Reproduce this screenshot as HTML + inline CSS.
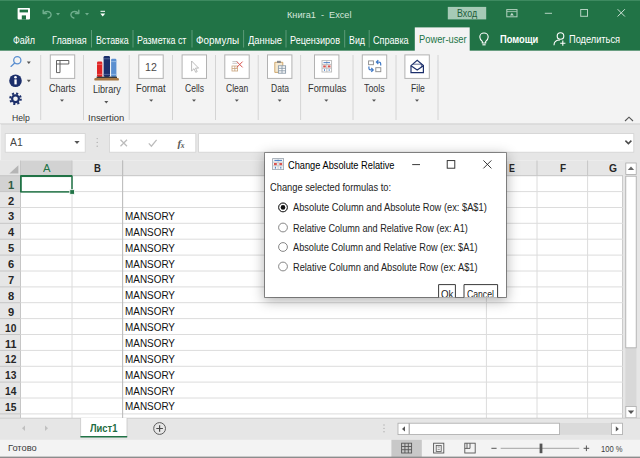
<!DOCTYPE html>
<html><head><meta charset="utf-8"><title>Excel</title>
<style>
html,body{margin:0;padding:0}
body{width:640px;height:458px;position:relative;overflow:hidden;background:#e6e6e6;font-family:"Liberation Sans",sans-serif}
svg{position:absolute;left:0;top:0}
.t{position:absolute;white-space:pre;line-height:14px;transform-origin:0 50%}
</style></head><body>
<svg width="640" height="458" viewBox="0 0 640 458">
<!-- title + tabs -->
<rect x="0" y="0" width="640" height="50.8" fill="#217346"/>
<rect x="0" y="0" width="640" height="1" fill="#3d8a60"/>
<!-- ribbon -->
<rect x="0" y="50.8" width="640" height="72.7" fill="#f3f3f3"/>
<rect x="0" y="123.5" width="640" height="1" fill="#d0d0d0"/>
<!-- active tab -->
<rect x="414.8" y="27.4" width="54.9" height="24" fill="#f3f3f3"/>
<!-- tab separators -->
<g stroke="#5c9a78" stroke-width="1">
<path d="M91.5 30V47.5M133 30V47.5M192 30V47.5M243.6 30V47.5M286 30V47.5M344.7 30V47.5M369.2 30V47.5"/>
</g>
<!-- Вход button -->
<rect x="447.8" y="6.9" width="38.4" height="12.5" fill="#a6cab6"/>
<!-- save icon -->
<rect x="17.6" y="7.9" width="12.4" height="11.5" rx="0.8" fill="#fff"/>
<rect x="19.6" y="9.6" width="8.4" height="2.8" fill="#217346"/>
<rect x="21.8" y="15.4" width="4.2" height="4.2" fill="#217346"/>
<rect x="19.4" y="14.2" width="8.8" height="1.2" fill="#217346" opacity="0"/>
<!-- undo/redo -->
<g fill="none" stroke="#6fae8d" stroke-width="1.4" stroke-linecap="round" stroke-linejoin="round">
<path d="M43.2 10.2V13.6H46.6"/><path d="M43.6 13.3C45.5 11 49 10.8 50.6 13C51.8 15 50.8 17.2 48.2 18"/>
<path d="M78.8 10.2V13.6H75.4"/><path d="M78.4 13.3C76.5 11 73 10.8 71.4 13C70.2 15 71.2 17.2 73.8 18"/>
</g>
<path d="M56 13L60 13L58 15.4Z" fill="#6fae8d"/>
<path d="M85 13L89 13L87 15.4Z" fill="#6fae8d"/>
<path d="M100.5 11.3H105" stroke="#fff" stroke-width="1"/>
<path d="M100.3 13.6L105.2 13.6L102.75 16.4Z" fill="#fff"/>
<!-- ribbon display options -->
<g fill="none" stroke="#b4d2c1" stroke-width="1">
<rect x="506.8" y="9.6" width="10.2" height="7.2"/>
<path d="M507 11.6H516.8" stroke-width="0.8"/>
</g>
<path d="M510 15.4L511.9 12.8L513.8 15.4Z" fill="#c4dccf"/>
<!-- window controls -->
<g fill="none" stroke="#b4d2c1" stroke-width="1">
<path d="M544.8 13.3H552"/>
<rect x="580.7" y="9.5" width="6.8" height="6.8"/>
<path d="M617.6 9.2L624.9 16.5M624.9 9.2L617.6 16.5" stroke="#cde1d6"/>
</g>
<!-- lightbulb -->
<g fill="none" stroke="#fff" stroke-width="1.1">
<path d="M482.3 43V41.4C480.6 40 479.8 38.6 479.8 37C479.8 34.7 481.7 33 484 33C486.3 33 488.2 34.7 488.2 37C488.2 38.6 487.4 40 485.7 41.4V43Z"/>
<path d="M482.4 44.8H485.6"/>
</g>
<!-- share icon -->
<g fill="none" stroke="#fff" stroke-width="1.1">
<circle cx="560.5" cy="36" r="3.3"/>
<path d="M554 45.2C554 41.6 556.6 40 560 40"/>
<path d="M560.2 43.2H565.4M562.8 40.6V45.8"/>
</g>
<!-- ribbon separators -->
<g stroke="#d4d4d4" stroke-width="1">
<path d="M40.7 55V120M83.5 55V120M129.2 55V120M172.5 55V120M215.5 55V120M258.2 55V120M300.6 55V120M353 55V120M396 55V120M438 55V120"/>
</g>
<!-- big button icon boxes -->
<g fill="#fff" stroke="#b2b2b2" stroke-width="1">
<rect x="50.3" y="54.9" width="24.4" height="23.5"/>
<rect x="138.8" y="54.9" width="24.4" height="23.5"/>
<rect x="182.1" y="54.9" width="24.4" height="23.5"/>
<rect x="224.8" y="54.9" width="24.4" height="23.5"/>
<rect x="267.5" y="54.9" width="24.4" height="23.5"/>
<rect x="314.5" y="54.9" width="24.4" height="23.5"/>
<rect x="362.3" y="54.9" width="24.4" height="23.5"/>
<rect x="404.9" y="54.9" width="24.4" height="23.5"/>
</g>
<!-- drop arrows under big buttons -->
<g fill="#555">
<path d="M60 99.4L64 99.4L62 101.8Z"/>
<path d="M104.3 101L108.3 101L106.3 103.4Z"/>
<path d="M149.2 99.4L153.2 99.4L151.2 101.8Z"/>
<path d="M192 99.4L196 99.4L194 101.8Z"/>
<path d="M234.8 99.4L238.8 99.4L236.8 101.8Z"/>
<path d="M277.7 99.4L281.7 99.4L279.7 101.8Z"/>
<path d="M324.3 99.4L328.3 99.4L326.3 101.8Z"/>
<path d="M372 99.4L376 99.4L374 101.8Z"/>
<path d="M415 99.4L419 99.4L417 101.8Z"/>
<path d="M26.8 61.5L30.8 61.5L28.8 63.9Z"/>
<path d="M26.8 79.8L30.8 79.8L28.8 82.2Z"/>
</g>
<!-- help group icons -->
<g fill="none" stroke="#5b8fd0" stroke-width="1.3">
<circle cx="17.3" cy="60.2" r="3.6"/>
<path d="M14.7 63L11 66.4" stroke-linecap="round"/>
</g>
<circle cx="15.5" cy="80.7" r="6.3" fill="#1c2f6b"/>
<rect x="14.4" y="79.4" width="2.3" height="5" fill="#fff"/>
<circle cx="15.5" cy="77.3" r="1.3" fill="#fff"/>
<g fill="none" stroke="#1c2f6b">
<circle cx="15.5" cy="98.7" r="3.4" stroke-width="2.2"/>
<circle cx="15.5" cy="98.7" r="5.3" stroke-width="2" stroke-dasharray="2.08 2.08"/>
</g>
<!-- charts icon -->
<g fill="none" stroke="#555" stroke-width="0.9">
<path d="M56.5 60.5H68.8V64H60V72.6H56.5Z"/>
<path d="M60 60.5V64H56.5"/>
</g>
<!-- library books -->
<rect x="97" y="61.6" width="5.3" height="15.4" rx="1.2" fill="#e02424"/>
<rect x="103.6" y="55.9" width="6.4" height="21.1" rx="1.4" fill="#1c2f6b"/>
<rect x="111.1" y="58.8" width="5.3" height="18.2" rx="1.2" fill="#5b8fd0"/>
<path d="M97 64.3H102.3M97 74.4H102.3" stroke="#f08a8a" stroke-width="0.7"/>
<path d="M103.6 58.8H110M103.6 74.4H110" stroke="#6d7cae" stroke-width="0.7"/>
<path d="M111.1 61.6H116.4M111.1 74.4H116.4" stroke="#a9c6ea" stroke-width="0.7"/>
<rect x="96.6" y="76.6" width="20.4" height="1.4" fill="#3a3a3a"/>
<rect x="94.3" y="77.9" width="24.6" height="2.7" rx="1.2" fill="#a87844"/>
<!-- cells cursor -->
<path d="M191.6 61L191.6 71L194 68.7L195.7 72.3L197.2 71.6L195.5 68.1L198.6 68.1Z" fill="#fff" stroke="#aaa" stroke-width="0.8"/>
<!-- clean icon -->
<g fill="none" stroke="#c8a27a" stroke-width="0.8">
<rect x="232" y="66" width="5.6" height="5"/>
<path d="M232 68.5H237.6M234.8 66V71"/>
<path d="M232.4 61.5H237.6M232.4 63.3H237.6" stroke="#bbb"/>
</g>
<path d="M236.8 61.6L242.6 67.4M242.6 61.6L236.8 67.4" stroke="#d9534f" stroke-width="1"/>
<!-- data icon -->
<g fill="none" stroke-width="0.9">
<path d="M274.8 62.3H282.8V72.4H274.8Z" stroke="#c9a063" fill="#f7e9cf"/>
<rect x="277" y="60.8" width="3.8" height="2.2" fill="#888" stroke="none"/>
<rect x="278.4" y="65.8" width="7.2" height="7.4" fill="#fff" stroke="#8a9aa8"/>
<path d="M278.4 68.3H285.6M278.4 70.8H285.6M282 65.8V73.2" stroke="#8a9aa8"/>
</g>
<!-- formulas icon -->
<g stroke-width="0.9">
<rect x="322" y="60.6" width="9.6" height="11.4" fill="#fff" stroke="#b8b8b8"/>
<path d="M322 64.4H331.6M322 68.2H331.6M326.8 60.6V72" stroke="#b8b8b8" fill="none"/>
<rect x="323.2" y="65.4" width="2.6" height="2" fill="#d9534f" stroke="none"/>
<rect x="327.9" y="65.4" width="2.6" height="2" fill="#d9534f" stroke="none"/>
<path d="M323.5 62.6L330 62.6" stroke="#3f78c5"/>
<path d="M324.5 70.9V69.2M329.2 70.9V69.2" stroke="#3f78c5"/>
</g>
<!-- tools icon -->
<g fill="none" stroke-width="0.9">
<rect x="368.6" y="60.9" width="4.8" height="3.8" stroke="#8a8a8a"/>
<rect x="375.8" y="67.7" width="5" height="4" stroke="#8a8a8a"/>
<path d="M380.7 65.4V63.8Q380.7 62.1 379 62.1H376.6M378.3 60.2L376.4 62.1L378.3 64" stroke="#3f78c5" stroke-width="1.2"/>
<path d="M368.9 66.4V68.2Q368.9 69.9 370.6 69.9H373M371.3 68L373.2 69.9L371.3 71.8" stroke="#3f78c5" stroke-width="1.2"/>
</g>
<!-- file envelope -->
<g fill="none" stroke="#1c2f6b" stroke-width="1.2">
<path d="M411 65.6L417.2 60.4L423.4 65.6V72.6H411Z"/>
<path d="M411 65.8L417.2 70L423.4 65.8"/>
<path d="M413 64.2H421.4V67" stroke-width="0.7"/>
</g>
<!-- collapse ribbon -->
<path d="M625 121L629 117.2L633 121" fill="none" stroke="#555" stroke-width="1.1"/>

<rect x="0" y="124" width="0.9" height="334" fill="#fff" opacity="0.5"/>
<!-- formula bar -->
<rect x="5.2" y="133.6" width="80" height="18.6" fill="#fff" stroke="#d2d2d2" stroke-width="0.8"/>
<path d="M74.4 141L79.6 141L77 144Z" fill="#555"/>
<g fill="#b0b0b0"><circle cx="97.2" cy="138.6" r="0.7"/><circle cx="97.2" cy="142.4" r="0.7"/><circle cx="97.2" cy="146.2" r="0.7"/></g>
<rect x="109.4" y="133.6" width="86.4" height="18.6" fill="#fff" stroke="#d2d2d2" stroke-width="0.8"/>
<path d="M120.5 139.8L127 146.3M127 139.8L120.5 146.3" stroke="#bcbcbc" stroke-width="1.3" fill="none"/>
<path d="M148.8 143.4L151.4 146.2L156.6 139.8" stroke="#bcbcbc" stroke-width="1.3" fill="none"/>
<rect x="198.6" y="133.6" width="435.2" height="18.6" fill="#fff" stroke="#d2d2d2" stroke-width="0.8"/>
<path d="M625.4 140.6L628.4 143.6L631.4 140.6" fill="none" stroke="#4a4a4a" stroke-width="1.5"/>

<!-- grid -->
<rect x="0" y="160.5" width="624.5" height="257.5" fill="#fff"/>
<rect x="0" y="160.5" width="624.5" height="15.3" fill="#e6e6e6"/>
<rect x="0" y="160.5" width="20.5" height="257.5" fill="#e6e6e6"/>
<rect x="20.5" y="160.5" width="51.5" height="15.3" fill="#d2d2d2"/>
<rect x="0" y="175.8" width="20.5" height="16" fill="#d2d2d2"/>
<path d="M18.4 165.2V173.6H9.4Z" fill="#b5b5b5"/>
<!-- header separators -->
<g stroke="#c6c6c6" stroke-width="1" fill="none">
<path d="M20.5 160.5V418M72 160.5V175.8M122.6 160.5V175.8M486.4 160.5V175.8M537 160.5V175.8M587.6 160.5V175.8M622.6 175.7V418"/>
<path d="M0 175.7H624M0 191.6H20.5M0 207.5H20.5M0 223.3H20.5M0 239.2H20.5M0 255.1H20.5M0 271.0H20.5M0 286.9H20.5M0 302.7H20.5M0 318.6H20.5M0 334.5H20.5M0 350.4H20.5M0 366.3H20.5M0 382.1H20.5M0 398.0H20.5M0 413.9H20.5"/>
</g>
<g stroke="#dcdcdc" stroke-width="1" fill="none">
<path d="M72 176V418M486.4 176V418M537 176V418M587.6 176V418"/>
<path d="M20.5 191.6H624M20.5 207.5H624M20.5 223.3H624M20.5 239.2H624M20.5 255.1H624M20.5 271.0H624M20.5 286.9H624M20.5 302.7H624M20.5 318.6H624M20.5 334.5H624M20.5 350.4H624M20.5 366.3H624M20.5 382.1H624M20.5 398.0H624M20.5 413.9H624"/>
</g>
<path d="M122.6 160.5V418" stroke="#bdbdbd" stroke-width="1.1"/>
<!-- selection -->
<rect x="20.3" y="160.5" width="51.8" height="15.3" fill="none"/>
<path d="M20.5 175.6H72" stroke="#217346" stroke-width="1.4"/>
<path d="M20.6 175.8V192" stroke="#217346" stroke-width="1.2"/>
<rect x="21" y="176.3" width="51" height="15.6" fill="none" stroke="#217346" stroke-width="1.5"/>
<rect x="69.8" y="189.7" width="4.6" height="4.6" fill="#217346" stroke="#fff" stroke-width="0.8"/>

<!-- vertical scrollbar -->
<rect x="623" y="160.5" width="17" height="258" fill="#e6e6e6"/>
<rect x="625.4" y="176" width="11" height="230" fill="#d8d8d8"/>
<rect x="625.8" y="163" width="10.4" height="11.4" fill="#fff" stroke="#ababab" stroke-width="0.8"/>
<path d="M627.8 170L631 166.6L634.2 170Z" fill="#666"/>
<rect x="625.8" y="176.2" width="10.4" height="171.6" fill="#fff" stroke="#ababab" stroke-width="0.8"/>
<rect x="625.8" y="406.4" width="10.4" height="11.4" fill="#fff" stroke="#ababab" stroke-width="0.8"/>
<path d="M627.8 410.6L634.2 410.6L631 414Z" fill="#555"/>

<!-- sheet tab bar -->
<rect x="0" y="418" width="640" height="22" fill="#e6e6e6"/>
<path d="M0 418.2H640" stroke="#c6c6c6" stroke-width="0.8"/>
<rect x="80.6" y="418" width="46.4" height="18.6" fill="#fff"/>
<path d="M80.6 418V437M127 418V437" stroke="#c6c6c6" stroke-width="0.8"/>
<path d="M80.4 436.8H127.2" stroke="#217346" stroke-width="1.6"/>
<path d="M25 425.4L22 428.2L25 431Z" fill="#c0c0c0"/>
<path d="M45 425.4L48 428.2L45 431Z" fill="#c0c0c0"/>
<circle cx="159.6" cy="428.5" r="5.9" fill="none" stroke="#5a5a5a" stroke-width="1"/>
<path d="M156.3 428.5H162.9M159.6 425.2V431.8" stroke="#4a4a4a" stroke-width="1.2"/>
<g fill="#b0b0b0"><circle cx="384" cy="425" r="0.7"/><circle cx="384" cy="428.4" r="0.7"/><circle cx="384" cy="431.8" r="0.7"/></g>
<!-- horizontal scrollbar -->
<rect x="409" y="423" width="202.6" height="11.8" fill="#dadada"/>
<rect x="398" y="423.2" width="11" height="11.4" fill="#fff" stroke="#ababab" stroke-width="0.8"/>
<path d="M405 426.3L402 428.9L405 431.5Z" fill="#555"/>
<rect x="409.6" y="423.2" width="150" height="11.4" fill="#fff" stroke="#ababab" stroke-width="0.8"/>
<rect x="611.6" y="423.2" width="10.8" height="11.4" fill="#fff" stroke="#ababab" stroke-width="0.8"/>
<path d="M615.8 426.3L618.8 428.9L615.8 431.5Z" fill="#555"/>

<!-- status bar -->
<rect x="0" y="439.8" width="640" height="18.2" fill="#f3f3f3"/>
<rect x="391.4" y="439.8" width="30.4" height="18.2" fill="#c8c8c8"/>
<rect x="0" y="456.6" width="640" height="1.4" fill="#8c8c8c"/>
<g fill="none" stroke="#555" stroke-width="0.9">
<rect x="401.6" y="443.2" width="10" height="9.8"/>
<path d="M401.6 446.5H411.6M401.6 449.7H411.6M404.9 443.2V453M408.3 443.2V453"/>
<rect x="433.6" y="443.2" width="10.2" height="9.8"/>
<rect x="436.2" y="445.4" width="5" height="6" stroke-width="0.8"/>
<path d="M437.6 447H439.8M437.6 449.4H439.8" stroke-width="0.6"/>
<rect x="464.8" y="443.2" width="10.4" height="9.8"/>
<path d="M470 443.2V448.4M464.8 448.4H470M467 443.2V448.4" />
</g>
<path d="M491.4 448.3H496.6" stroke="#555" stroke-width="1"/>
<path d="M500.7 448.3H579.2" stroke="#9a9a9a" stroke-width="0.9"/>
<rect x="539.6" y="443.6" width="2.8" height="9.6" fill="#555"/>
<path d="M583.6 448.3H589.2M586.4 445.5V451.1" stroke="#555" stroke-width="1"/>
</svg>
<span class="t" style="left:287.00px;top:7.50px;font-size:9.5px;transform:scaleX(0.9645);color:#d5e6dc;">Книга1  -  Excel</span>
<span class="t" style="left:457.30px;top:6.50px;font-size:10.2px;transform:scaleX(0.8721);color:#1e5c3a;">Вход</span>
<span class="t" style="left:13.30px;top:32.50px;font-size:10.8px;transform:scaleX(0.8287);color:#ffffff;">Файл</span>
<span class="t" style="left:52.30px;top:32.50px;font-size:10.8px;transform:scaleX(0.8441);color:#ffffff;">Главная</span>
<span class="t" style="left:96.00px;top:32.50px;font-size:10.8px;transform:scaleX(0.8146);color:#ffffff;">Вставка</span>
<span class="t" style="left:137.30px;top:32.50px;font-size:10.8px;transform:scaleX(0.8233);color:#ffffff;">Разметка ст</span>
<span class="t" style="left:196.00px;top:32.50px;font-size:10.8px;transform:scaleX(0.9152);color:#ffffff;">Формулы</span>
<span class="t" style="left:247.60px;top:32.50px;font-size:10.8px;transform:scaleX(0.8689);color:#ffffff;">Данные</span>
<span class="t" style="left:290.00px;top:32.50px;font-size:10.8px;transform:scaleX(0.8403);color:#ffffff;">Рецензиров</span>
<span class="t" style="left:349.00px;top:32.50px;font-size:10.8px;transform:scaleX(0.8185);color:#ffffff;">Вид</span>
<span class="t" style="left:373.40px;top:32.50px;font-size:10.8px;transform:scaleX(0.8404);color:#ffffff;">Справка</span>
<span class="t" style="left:418.75px;top:31.90px;font-size:10.8px;transform:scaleX(0.8632);color:#217346;">Power-user</span>
<span class="t" style="left:499.70px;top:31.80px;font-size:10.8px;transform:scaleX(0.8625);color:#ffffff;font-weight:700;">Помощи</span>
<span class="t" style="left:569.00px;top:31.80px;font-size:10.8px;transform:scaleX(0.8553);color:#ffffff;">Поделиться</span>
<span class="t" style="left:11.90px;top:110.60px;font-size:9.8px;transform:scaleX(0.8831);color:#333333;">Help</span>
<span class="t" style="left:87.50px;top:110.60px;font-size:9.8px;transform:scaleX(0.9647);color:#333333;">Insertion</span>
<span class="t" style="left:49.25px;top:81.50px;font-size:10.3px;transform:scaleX(0.8738);color:#333333;">Charts</span>
<span class="t" style="left:93.00px;top:83.00px;font-size:10.3px;transform:scaleX(0.8814);color:#333333;">Library</span>
<span class="t" style="left:136.25px;top:81.50px;font-size:10.3px;transform:scaleX(0.9042);color:#333333;">Format</span>
<span class="t" style="left:184.50px;top:81.50px;font-size:10.3px;transform:scaleX(0.8300);color:#333333;">Cells</span>
<span class="t" style="left:225.75px;top:81.50px;font-size:10.3px;transform:scaleX(0.8269);color:#333333;">Clean</span>
<span class="t" style="left:271.00px;top:81.50px;font-size:10.3px;transform:scaleX(0.8270);color:#333333;">Data</span>
<span class="t" style="left:307.50px;top:81.50px;font-size:10.3px;transform:scaleX(0.8970);color:#333333;">Formulas</span>
<span class="t" style="left:364.00px;top:81.50px;font-size:10.3px;transform:scaleX(0.8608);color:#333333;">Tools</span>
<span class="t" style="left:410.50px;top:81.50px;font-size:10.3px;transform:scaleX(0.8377);color:#333333;">File</span>
<span class="t" style="left:145.20px;top:59.60px;font-size:10.8px;transform:scaleX(0.9821);color:#4a4a4a;">12</span>
<span class="t" style="left:10.20px;top:136.20px;font-size:10.4px;transform:scaleX(0.9985);color:#444;">A1</span>
<span class="t" style="left:42.70px;top:161.60px;font-size:10.2px;transform:scaleX(1.1034);color:#217346;">A</span>
<span class="t" style="left:93.80px;top:161.60px;font-size:10.2px;transform:scaleX(0.9376);color:#262626;font-weight:700;">B</span>
<span class="t" style="left:508.80px;top:161.60px;font-size:10.2px;transform:scaleX(0.8680);color:#262626;font-weight:700;">E</span>
<span class="t" style="left:559.50px;top:161.60px;font-size:10.2px;transform:scaleX(0.9784);color:#262626;font-weight:700;">F</span>
<span class="t" style="left:608.70px;top:161.60px;font-size:10.2px;transform:scaleX(1.0079);color:#262626;font-weight:700;">G</span>
<span class="t" style="left:7.60px;top:177.70px;font-size:10.8px;transform:scaleX(1.0306);color:#2f5a43;font-weight:700;">1</span>
<span class="t" style="left:7.60px;top:193.58px;font-size:10.8px;transform:scaleX(1.0306);color:#262626;font-weight:700;">2</span>
<span class="t" style="left:7.60px;top:209.46px;font-size:10.8px;transform:scaleX(1.0306);color:#262626;font-weight:700;">3</span>
<span class="t" style="left:125.00px;top:209.86px;font-size:10.3px;transform:scaleX(0.9636);color:#111;">MANSORY</span>
<span class="t" style="left:7.60px;top:225.34px;font-size:10.8px;transform:scaleX(1.0306);color:#262626;font-weight:700;">4</span>
<span class="t" style="left:125.00px;top:225.74px;font-size:10.3px;transform:scaleX(0.9636);color:#111;">MANSORY</span>
<span class="t" style="left:7.60px;top:241.22px;font-size:10.8px;transform:scaleX(1.0306);color:#262626;font-weight:700;">5</span>
<span class="t" style="left:125.00px;top:241.62px;font-size:10.3px;transform:scaleX(0.9636);color:#111;">MANSORY</span>
<span class="t" style="left:7.60px;top:257.10px;font-size:10.8px;transform:scaleX(1.0306);color:#262626;font-weight:700;">6</span>
<span class="t" style="left:125.00px;top:257.50px;font-size:10.3px;transform:scaleX(0.9636);color:#111;">MANSORY</span>
<span class="t" style="left:7.60px;top:272.98px;font-size:10.8px;transform:scaleX(1.0306);color:#262626;font-weight:700;">7</span>
<span class="t" style="left:125.00px;top:273.38px;font-size:10.3px;transform:scaleX(0.9636);color:#111;">MANSORY</span>
<span class="t" style="left:7.60px;top:288.86px;font-size:10.8px;transform:scaleX(1.0306);color:#262626;font-weight:700;">8</span>
<span class="t" style="left:125.00px;top:289.26px;font-size:10.3px;transform:scaleX(0.9636);color:#111;">MANSORY</span>
<span class="t" style="left:7.60px;top:304.74px;font-size:10.8px;transform:scaleX(1.0306);color:#262626;font-weight:700;">9</span>
<span class="t" style="left:125.00px;top:305.14px;font-size:10.3px;transform:scaleX(0.9636);color:#111;">MANSORY</span>
<span class="t" style="left:5.00px;top:320.62px;font-size:10.8px;transform:scaleX(0.9488);color:#262626;font-weight:700;">10</span>
<span class="t" style="left:125.00px;top:321.02px;font-size:10.3px;transform:scaleX(0.9636);color:#111;">MANSORY</span>
<span class="t" style="left:5.00px;top:336.50px;font-size:10.8px;transform:scaleX(0.9981);color:#262626;font-weight:700;">11</span>
<span class="t" style="left:125.00px;top:336.90px;font-size:10.3px;transform:scaleX(0.9636);color:#111;">MANSORY</span>
<span class="t" style="left:5.00px;top:352.38px;font-size:10.8px;transform:scaleX(0.9488);color:#262626;font-weight:700;">12</span>
<span class="t" style="left:125.00px;top:352.78px;font-size:10.3px;transform:scaleX(0.9636);color:#111;">MANSORY</span>
<span class="t" style="left:5.00px;top:368.26px;font-size:10.8px;transform:scaleX(0.9488);color:#262626;font-weight:700;">13</span>
<span class="t" style="left:125.00px;top:368.66px;font-size:10.3px;transform:scaleX(0.9636);color:#111;">MANSORY</span>
<span class="t" style="left:5.00px;top:384.14px;font-size:10.8px;transform:scaleX(0.9488);color:#262626;font-weight:700;">14</span>
<span class="t" style="left:125.00px;top:384.54px;font-size:10.3px;transform:scaleX(0.9636);color:#111;">MANSORY</span>
<span class="t" style="left:5.00px;top:400.02px;font-size:10.8px;transform:scaleX(0.9488);color:#262626;font-weight:700;">15</span>
<span class="t" style="left:125.00px;top:400.42px;font-size:10.3px;transform:scaleX(0.9636);color:#111;">MANSORY</span>
<span class="t" style="left:90.00px;top:421.20px;font-size:10.8px;transform:scaleX(0.8694);color:#1e6b41;font-weight:700;">Лист1</span>
<span class="t" style="left:7.50px;top:441.40px;font-size:9.4px;transform:scaleX(0.9913);color:#3b3b3b;">Готово</span>
<span class="t" style="left:600.80px;top:441.90px;font-size:8.3px;transform:scaleX(0.9137);color:#3b3b3b;">100 %</span>
<span class="t" style="left:177.4px;top:135.8px;font-family:'Liberation Serif',serif;font-style:italic;font-weight:700;font-size:11px;color:#5a5a5a;letter-spacing:-0.2px">f<span style="font-size:7.5px;position:relative;top:1px">x</span></span>

<!-- dialog -->
<div style="position:absolute;left:265.2px;top:153.2px;width:240.8px;height:144.2px;background:#fff;box-shadow:0 3px 12px 1px rgba(0,0,0,0.30), 0 0 0 0.8px #7d7d7d;"></div>
<svg width="640" height="458" viewBox="0 0 640 458">
<!-- dialog icon -->
<rect x="272.6" y="158.6" width="11" height="11" fill="#f4f4f4" stroke="#9aa3ad" stroke-width="0.8"/>
<path d="M272.6 162.2H283.6M272.6 165.8H283.6M278.1 158.6V169.6" stroke="#b8bec6" stroke-width="0.7"/>
<rect x="274" y="163" width="2.8" height="2.2" fill="#d9534f"/>
<rect x="279.4" y="163" width="2.8" height="2.2" fill="#d9534f"/>
<path d="M274.4 160.4H282" stroke="#3f78c5" stroke-width="1"/>
<path d="M275.4 168.6V166.8M280.8 168.6V166.8" stroke="#3f78c5" stroke-width="1"/>
<!-- dialog controls -->
<g fill="none" stroke="#222" stroke-width="0.9">
<path d="M412.2 164.6H420"/>
<rect x="447.2" y="160.6" width="7.6" height="7.6"/>
<path d="M483.4 160.4L491.4 168.4M491.4 160.4L483.4 168.4"/>
</g>
<!-- radios -->
<g fill="#fff" stroke="#686868" stroke-width="0.8">
<circle cx="283" cy="207.4" r="4.4"/>
<circle cx="283" cy="227.5" r="4.4"/>
<circle cx="283" cy="247" r="4.4"/>
<circle cx="283" cy="266.5" r="4.4"/>
</g>
<circle cx="283" cy="207.4" r="4.4" fill="none" stroke="#222" stroke-width="0.9"/>
<circle cx="283" cy="207.4" r="2.3" fill="#111"/>
<!-- buttons (clipped by dialog bottom) -->
<g fill="#fff" stroke="#3a3a3a" stroke-width="1">
<path d="M438.6 297.4V284.6H455.4V297.4"/>
<path d="M464 297.4V284.6H497.6V297.4"/>
</g>
</svg>
<div style="position:absolute;left:0;top:0;width:640px;height:297.4px;overflow:hidden">
<span class="t" style="left:288.30px;top:157.50px;font-size:10.8px;transform:scaleX(0.8571);color:#000;">Change Absolute Relative</span>
<span class="t" style="left:269.60px;top:180.00px;font-size:10.8px;transform:scaleX(0.8622);color:#222222;">Change selected formulas to:</span>
<span class="t" style="left:292.90px;top:200.30px;font-size:10.8px;transform:scaleX(0.8610);color:#222222;">Absolute Column and Absolute Row (ex: $A$1)</span>
<span class="t" style="left:292.90px;top:220.50px;font-size:10.8px;transform:scaleX(0.8443);color:#222222;">Relative Column and Relative Row (ex: A1)</span>
<span class="t" style="left:292.90px;top:240.00px;font-size:10.8px;transform:scaleX(0.8516);color:#222222;">Absolute Column and Relative Row (ex: $A1)</span>
<span class="t" style="left:292.90px;top:259.50px;font-size:10.8px;transform:scaleX(0.8563);color:#222222;">Relative Column and Absolute Row (ex: A$1)</span>
<span class="t" style="left:440.70px;top:286.80px;font-size:10.8px;transform:scaleX(0.8988);color:#222222;">Ok</span>
<span class="t" style="left:467.30px;top:286.80px;font-size:10.8px;transform:scaleX(0.8004);color:#222222;">Cancel</span>
</div>
</body></html>
